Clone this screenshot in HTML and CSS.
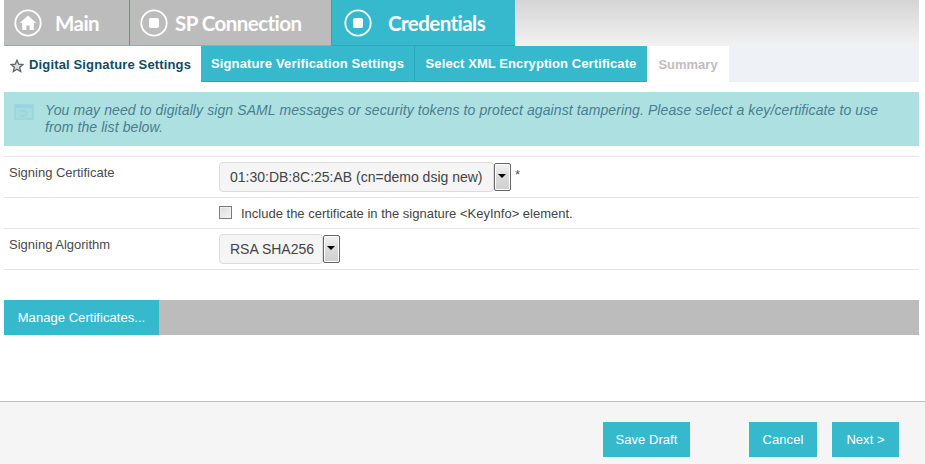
FILE: index.html
```html
<!DOCTYPE html>
<html lang="en">
<head>
<meta charset="utf-8">
<title>Credentials</title>
<link rel="stylesheet" href="styles.css">
</head>
<body>
<div class="page">
  <nav class="crumbs">
    <div class="crumb crumb-main">
      <svg class="crumb-icon" viewBox="0 0 28 28"><circle cx="14" cy="14" r="12.7" class="ring"/><path class="solid" d="M14 6.5 5.8 14h2.4v7h4.2v-4.6h3.2V21h4.2v-7h2.4z"/></svg>
      <span>Main</span>
    </div>
    <div class="crumb crumb-sp">
      <svg class="crumb-icon" viewBox="0 0 28 28"><circle cx="14" cy="14" r="12.7" class="ring"/><rect class="solid" x="9" y="9" width="10" height="10" rx="2"/></svg>
      <span>SP Connection</span>
    </div>
    <div class="crumb crumb-cred">
      <svg class="crumb-icon" viewBox="0 0 28 28"><circle cx="14" cy="14" r="12.7" class="ring"/><rect class="solid" x="9" y="9" width="10" height="10" rx="2"/></svg>
      <span>Credentials</span>
    </div>
    <div class="crumb-fill"></div>
  </nav>
  <div class="tabs">
    <div class="tab tab-current">
      <svg class="star" viewBox="0 0 14 14"><path d="M7 1.2 8.7 5.1 12.9 5.5 9.7 8.3 10.7 12.6 7 10.3 3.3 12.6 4.3 8.3 1.1 5.5 5.3 5.1z"/></svg>
      <span>Digital Signature Settings</span>
    </div>
    <div class="tab tab-sig">Signature Verification Settings</div>
    <div class="tab tab-xml">Select XML Encryption Certificate</div>
    <div class="tab tab-off">Summary</div>
    <div class="tabs-fill"></div>
  </div>
  <div class="notice">
    <svg class="notice-icon" viewBox="0 0 20 16"><rect x="1" y="1" width="18" height="14" class="n-frame"/><path class="n-bar" d="M1 1h18v3H1z"/><path class="n-chev" d="M6 7h4.5L13 9.5 10.5 12H6"/></svg>
    <p>You may need to digitally sign SAML messages or security tokens to protect against tampering. Please select a key/certificate to use from the list below.</p>
  </div>
  <form class="form">
    <div class="row row-cert">
      <label class="row-label">Signing Certificate</label>
      <div class="row-field">
        <div class="picker picker-cert"><span class="picker-value">01:30:DB:8C:25:AB (cn=demo dsig new)</span></div>
        <span class="arrow"></span>
        <span class="req">*</span>
      </div>
    </div>
    <div class="row row-check">
      <div class="row-label"></div>
      <div class="row-field">
        <span class="checkbox"></span>
        <span class="check-text">Include the certificate in the signature &lt;KeyInfo&gt; element.</span>
      </div>
    </div>
    <div class="row row-algo">
      <label class="row-label">Signing Algorithm</label>
      <div class="row-field">
        <div class="picker picker-algo"><span class="picker-value">RSA SHA256</span></div>
        <span class="arrow"></span>
      </div>
    </div>
  </form>
  <div class="actions">
    <div class="btn btn-manage">Manage Certificates...</div>
  </div>
</div>
<footer class="footer">
  <div class="btn btn-save">Save Draft</div>
  <div class="btn btn-cancel">Cancel</div>
  <div class="btn btn-next">Next &gt;</div>
</footer>
</body>
</html>
```
FILE: styles.css
```css
* { box-sizing: border-box; }
html, body { margin: 0; padding: 0; }
body {
  height: 464px;
  overflow: hidden;
  background: #fff;
  font-family: "Liberation Sans", Arial, sans-serif;
  color: #444;
  display: flex;
  flex-direction: column;
}
.page { width: 919px; padding-left: 4px; flex: 1 1 auto; }

.crumbs { display: flex; height: 46px; }
.crumb {
  display: flex;
  align-items: center;
  height: 46px;
  background: #bcbcbc;
  color: #fff;
  font-family: Lato, sans-serif;
  font-weight: 700;
  font-size: 20.5px;
  letter-spacing: -0.55px;
  border-bottom: 1px solid #9aa9ac;
}
.crumb-icon { width: 28px; height: 28px; flex: none; }
.ring { fill: none; stroke: #fff; stroke-width: 1.8; }
.solid { fill: #fff; }
.crumb-main { width: 126px; padding-left: 10px; border-right: 1px solid #2ea5b8; }
.crumb-main span { margin-left: 13px; }
.crumb-sp { width: 202px; padding-left: 10px; border-right: 1px solid #2ea5b8; }
.crumb-sp span { margin-left: 7px; }
.crumb-cred { width: 183px; padding-left: 12px; background: #36b8cd; border-bottom-color: #2ea5b8; }
.crumb-cred span { margin-left: 16px; }
.crumb-fill { flex: 1; background: linear-gradient(#d5d5d5, #f2f2f2); }

.tabs { display: flex; height: 36px; background: #eef2f6; }
.tab {
  display: flex;
  align-items: center;
  justify-content: center;
  font-size: 13px;
  font-weight: 700;
  letter-spacing: 0.15px;
  color: #fff;
  background: #36b8cd;
  border-bottom: 1px solid #2ea5b8;
}
.tab-current {
  width: 197px;
  justify-content: flex-start;
  padding-left: 6px;
  background: #fff;
  border-bottom: 0;
  color: #0f4c66;
}
.star { width: 14px; height: 14px; margin: 3px 5px 0 0; flex: none; }
.star path { fill: #dcdcdc; stroke: #5f6467; stroke-width: 1.3; }
.tab-sig { width: 213px; }
.tab-xml { width: 233px; border-left: 1px solid #2ea5b8; letter-spacing: 0.09px; }
.tab-off { width: 82px; background: #fff; border-bottom: 0; color: #c2bcbc; letter-spacing: 0; }
.tabs-fill { flex: 1; }

.notice {
  display: flex;
  align-items: flex-start;
  height: 54px;
  margin-top: 10px;
  padding: 10px 30px 0 10px;
  background: #ade1e1;
}
.notice-icon { width: 20px; height: 16px; margin: 2px 11px 0 0; flex: none; }
.n-frame { fill: #a6dbe0; stroke: #9ad4de; stroke-width: 1.5; }
.n-bar { fill: #9ad4de; }
.n-chev { fill: none; stroke: #9ad4de; stroke-width: 1.5; }
.notice p {
  margin: 0;
  font-size: 14px;
  line-height: 17px;
  letter-spacing: 0.1px;
  font-style: italic;
  color: #4a7d8f;
}

.form { margin-top: 10px; border-top: 1px solid #e6e6e6; }
.row { display: flex; border-bottom: 1px solid #e6e6e6; }
.row-label {
  width: 215px;
  flex: none;
  padding: 8px 0 0 5px;
  font-size: 13px;
  line-height: 15px;
  color: #4a4a4a;
}
.row-field { display: flex; align-items: flex-start; padding-top: 5px; }
.row-cert { height: 41px; }
.row-check { height: 31px; }
.row-check .row-field { padding-top: 8px; }
.row-algo { height: 41px; }

.picker {
  display: flex;
  align-items: center;
  height: 30px;
  padding-left: 10px;
  border: 1px solid #dcdcdc;
  border-radius: 4px;
  background: #f5f5f5;
  font-size: 14px;
  color: #444;
}
.picker-cert { width: 275px; }
.picker-algo { width: 104px; }
.arrow {
  position: relative;
  flex: none;
  width: 17px;
  height: 28px;
  margin-top: 1px;
  border: 1px solid #666;
  border-radius: 2px;
  background: linear-gradient(#f4f4f4, #dcdcdc 45%, #cfcfcf);
  box-shadow: inset 0 0 0 1px #fff;
}
.arrow::after {
  content: "";
  position: absolute;
  left: 3px;
  top: 10px;
  border-left: 4px solid transparent;
  border-right: 4px solid transparent;
  border-top: 4px solid #000;
}
.req { margin: 5px 0 0 4px; font-size: 13px; line-height: 16px; color: #555; }

.checkbox {
  width: 13px;
  height: 13px;
  flex: none;
  border: 1px solid #7b7b7b;
  background: linear-gradient(135deg, #dcdcdc, #f4f4f4);
  box-shadow: inset 0 0 0 1px #eee;
}
.check-text { margin-left: 9px; font-size: 13px; line-height: 16px; color: #444; }

.actions { height: 35px; margin-top: 30px; background: #bcbcbc; }
.btn {
  display: flex;
  align-items: center;
  justify-content: center;
  height: 35px;
  background: #36b8cd;
  color: #fff;
  font-size: 13px;
  letter-spacing: 0.05px;
}
.btn-manage { width: 155px; }

.footer {
  display: flex;
  flex: none;
  height: 63px;
  padding: 20px 26px 0 603px;
  background: #f5f5f5;
  border-top: 1px solid #bdbdbd;
}
.btn-save { width: 87px; }
.btn-cancel { width: 68px; margin-left: 59px; }
.btn-next { width: 67px; margin-left: 15px; }
```
